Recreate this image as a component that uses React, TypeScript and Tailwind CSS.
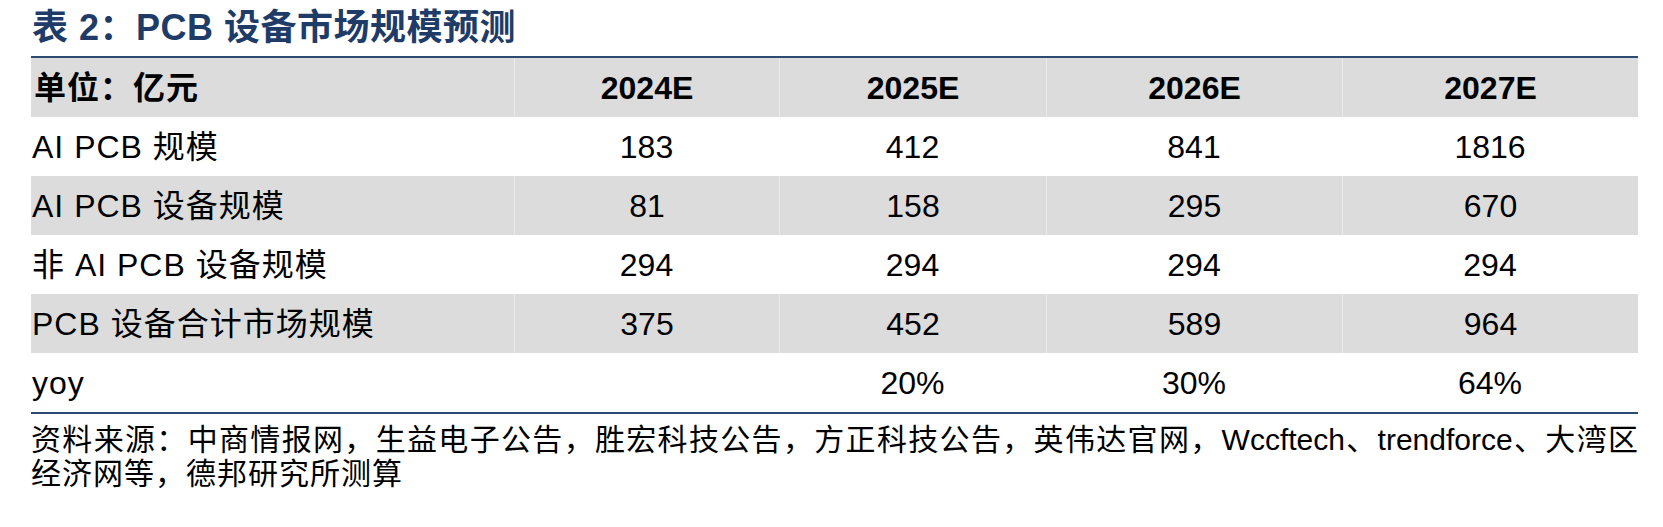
const rows: { label: string; values: string[]; shaded: boolean }[] = [
  { label: "AI PCB 规模", values: ["183", "412", "841", "1816"], shaded: false },
  { label: "AI PCB 设备规模", values: ["81", "158", "295", "670"], shaded: true },
  { label: "非 AI PCB 设备规模", values: ["294", "294", "294", "294"], shaded: false },
  { label: "PCB 设备合计市场规模", values: ["375", "452", "589", "964"], shaded: true },
  { label: "yoy", values: ["", "20%", "30%", "64%"], shaded: false },
];

const years = ["2024E", "2025E", "2026E", "2027E"];

const cols = "grid grid-cols-[483px_265px_267px_296px_296px]";

export default function App() {
  return (
    <div className="w-[1663px] h-[527px] bg-white text-black font-['Liberation_Sans','Noto_Sans_CJK_SC',sans-serif]">
      <div className="w-[1607px] ml-[31px]">
        {/* Title */}
        <div className="h-[56px] pt-[8px] pl-[1px]">
          <h1 className="text-[36px] leading-[40px] font-bold text-[#1f3c68] whitespace-nowrap tracking-[0.5px]">
            表 2：PCB 设备市场规模预测
          </h1>
        </div>

        {/* Table */}
        <div className="border-t-[2px] border-b-[2px] border-[#2d4a73]">
          <div className={`${cols} h-[59px] bg-[#dcdcdc] text-[32px] font-bold`}>
            <div className="flex items-center pl-[3px] tracking-[1px]">单位：亿元</div>
            {years.map((y) => (
              <div key={y} className="flex items-center justify-center border-l border-[#e9e9e9]">
                {y}
              </div>
            ))}
          </div>
          {rows.map((row) => (
            <div
              key={row.label}
              className={`${cols} h-[59px] text-[32px] ${row.shaded ? "bg-[#dcdcdc]" : "bg-white"}`}
            >
              <div className="flex items-center pl-[1px] whitespace-nowrap tracking-[1px]">{row.label}</div>
              {row.values.map((v, i) => (
                <div
                  key={i}
                  className={`flex items-center justify-center ${row.shaded ? "border-l border-[#e9e9e9]" : ""}`}
                >
                  {v}
                </div>
              ))}
            </div>
          ))}
        </div>

        {/* Source */}
        <div className="mt-[9px] text-[30px] leading-[34px]">
          <div className="text-justify [text-align-last:justify] whitespace-nowrap">
            资料来源：中商情报网，生益电子公告，胜宏科技公告，方正科技公告，英伟达官网，Wccftech、trendforce、大湾区
          </div>
          <div className="tracking-[1px]">经济网等，德邦研究所测算</div>
        </div>
      </div>
    </div>
  );
}
